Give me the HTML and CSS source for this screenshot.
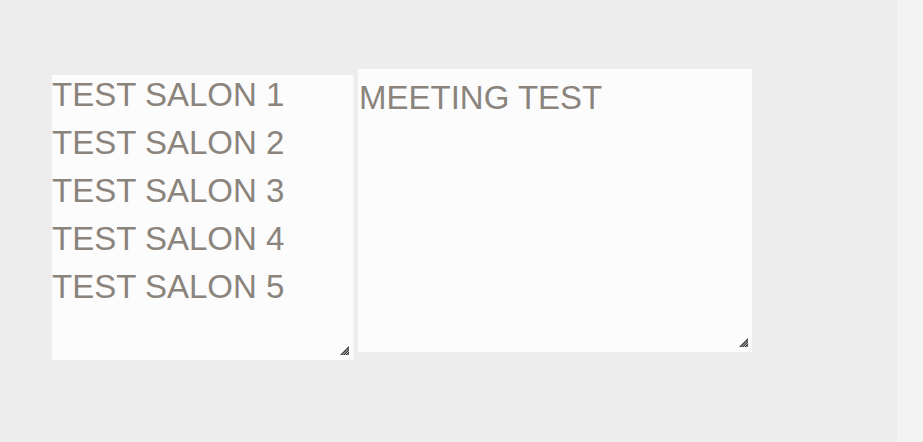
FILE: index.html
```html
<!DOCTYPE html>
<html lang="en">
<head>
    <meta charset="UTF-8">
    <meta name="viewport" content="width=device-width, initial-scale=1.0">
    <title>Salons</title>
    <link rel="stylesheet" href="styles.css">
</head>
<body>

<div class="page">
    <div class="main">
        <div class="box salons">
            <div class="lines">
                <div>TEST SALON 1</div>
                <div>TEST SALON 2</div>
                <div>TEST SALON 3</div>
                <div>TEST SALON 4</div>
                <div>TEST SALON 5</div>
            </div>
            <svg class="grip" width="9" height="9" viewBox="0 0 9 9">
                <path d="M9 0v9H0z" fill="#3c3c3c"/>
                <path d="M9 2.5L2.5 9M9 5L5 9M9 7.5L7.5 9" stroke="#fcfcfc" stroke-width="0.7"/>
            </svg>
        </div>
        <div class="box meeting">
            <textarea class="notes" readonly>MEETING TEST</textarea>
            <svg class="grip" width="9" height="9" viewBox="0 0 9 9">
                <path d="M9 0v9H0z" fill="#3c3c3c"/>
                <path d="M9 2.5L2.5 9M9 5L5 9M9 7.5L7.5 9" stroke="#fcfcfc" stroke-width="0.7"/>
            </svg>
        </div>
    </div>
    <div class="side"></div>
</div>

</body>
</html>
```

FILE: styles.css
```css
body { margin: 0; background-color: #ededed; font-family: "Liberation Sans", Arial, sans-serif; }
.page { display: flex; height: 442px; }
.main { flex: 1; display: flex; align-items: flex-start; gap: 4px; padding-left: 52px; }
.side { width: 26px; background-color: #f3f3f3; }

.box { position: relative; background-color: #fcfcfc; color: #8a847c; font-size: 33px; line-height: 48px; }
.salons { width: 301px; height: 285px; margin-top: 75px; overflow: hidden; border-right: 1px solid #f3f3f3; }
.salons .lines { margin-top: -4px; white-space: nowrap; }
.meeting { width: 394px; height: 283px; margin-top: 69px; }

.notes {
    display: block;
    width: 100%;
    height: 100%;
    box-sizing: border-box;
    margin: 0;
    padding: 5px 0 0 1px;
    border: none;
    outline: none;
    resize: none;
    background: transparent;
    color: inherit;
    font: inherit;
    line-height: 48px;
}

.grip { position: absolute; right: 4px; bottom: 5px; }
```
